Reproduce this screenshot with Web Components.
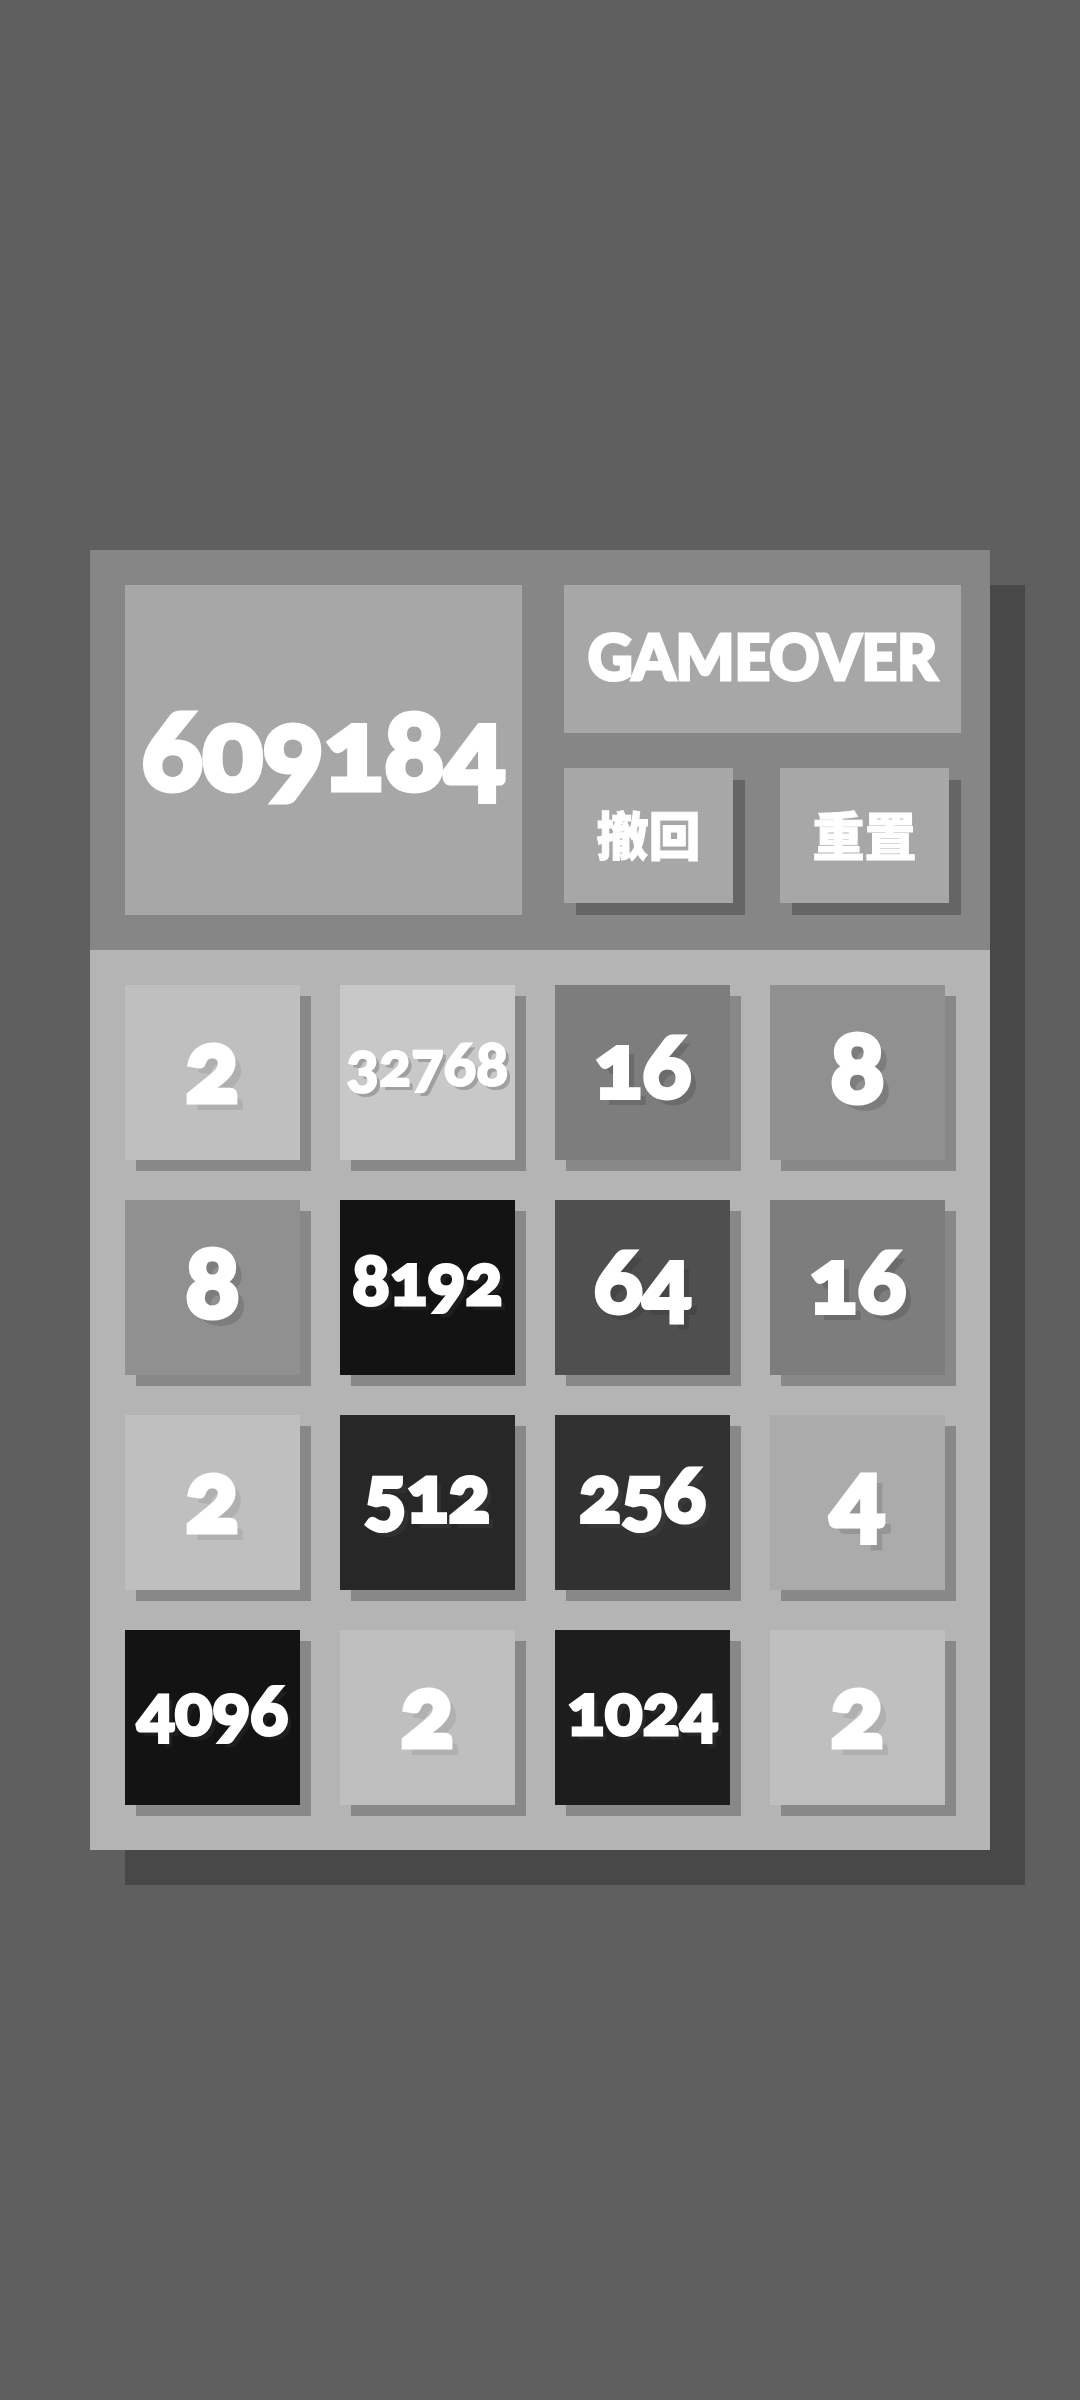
<!DOCTYPE html>
<html lang="zh-CN">
<head>
<meta charset="utf-8">
<meta name="viewport" content="width=device-width, initial-scale=1">
<title>2048</title>
<style>
  html, body { height: 100%; margin: 0; }
  body {
    background: #5f5f5f;
    color: #fff;
    font-family: Lato, "Noto Sans CJK SC", sans-serif;
    font-weight: 900;
    font-variant-numeric: oldstyle-nums;
    -webkit-text-stroke-color: #fff;
  }
</style>
</head>
<body>
<game-app></game-app>
<script>
  const define = (name, html, setup) => {
    const template = document.createElement('template');
    template.innerHTML = html;
    customElements.define(name, class extends HTMLElement {
      connectedCallback() {
        if (this.shadowRoot) return;
        this.attachShadow({ mode: 'open' }).append(template.content.cloneNode(true));
        if (setup) setup(this);
      }
    });
  };

  // Flat panel that shows a score or a status
  define('info-panel', `
    <style>
      :host {
        display: flex; align-items: center; justify-content: center;
        box-sizing: border-box; min-width: 0;
        padding-bottom: 6px;
        background: #a7a7a7;
        font-size: 62px; line-height: 1.2; white-space: nowrap;
        -webkit-text-stroke-width: 3px;
      }
      :host([large]) { font-size: 112px; -webkit-text-stroke-width: 5px; }
    </style>
    <output><slot></slot></output>
  `);

  // Raised push button
  define('game-button', `
    <style>
      :host { display: flex; min-width: 0; }
      button {
        flex: 1; margin: 0; padding: 0; border: 0;
        background: #a7a7a7; color: inherit;
        font: inherit; font-size: 52px; line-height: 1;
        -webkit-text-stroke-width: 1px;
        box-shadow: 12px 12px #656565;
        cursor: pointer;
      }
    </style>
    <button type="button"><slot></slot></button>
  `);

  // One tile; its colours and text size follow from its value
  const colours = {
    2: ['#bfbfbf', '#b0b0b0'], 4: ['#ababab', '#969696'],
    8: ['#909090', '#7d7d7d'], 16: ['#7d7d7d', '#6c6c6c'],
    64: ['#4f4f4f', '#464646'], 256: ['#313131', '#383838'],
    512: ['#272727', '#303030'], 1024: ['#1d1d1d', '#272727'],
    4096: ['#131313', '#1e1e1e'], 8192: ['#131313', '#1e1e1e'],
    32768: ['#c8c8c8', '#a0a0a0']
  };
  // digits: [text size, shadow offset, stroke]
  const sizes = { 1: [100, 8, 5], 2: [90, 7, 4], 3: [78, 6, 4], 4: [70, 5, 3], 5: [60, 4, 2] };

  define('game-tile', `
    <style>
      :host {
        display: flex; align-items: center; justify-content: center;
        box-sizing: border-box; aspect-ratio: 1; min-width: 0;
        padding-bottom: 20px;
        background: var(--tile);
        box-shadow: 11px 11px #888;
        font-size: var(--size); line-height: 1.2;
        text-shadow: var(--drop) var(--drop) var(--ink);
        -webkit-text-stroke-width: var(--stroke);
      }
    </style>
    <span></span>
  `, el => {
    const value = el.getAttribute('value');
    const [tile, ink] = colours[value];
    const [size, drop, stroke] = sizes[value.length];
    el.style.setProperty('--tile', tile);
    el.style.setProperty('--ink', ink);
    el.style.setProperty('--size', size + 'px');
    el.style.setProperty('--drop', drop + 'px');
    el.style.setProperty('--stroke', stroke + 'px');
    el.shadowRoot.querySelector('span').textContent = value;
  });

  define('game-header', `
    <style>
      :host {
        display: grid; grid-template-columns: minmax(0, 1fr) minmax(0, 1fr);
        gap: 42px; padding: 35px 29px 35px 35px;
        background: #868686;
      }
      .side { display: grid; grid-template-rows: 148px 135px; gap: 35px; padding-bottom: 12px; }
      .actions {
        display: grid; grid-template-columns: 1fr 1fr;
        gap: 47px; padding-right: 12px;
      }
    </style>
    <info-panel large>609184</info-panel>
    <div class="side">
      <info-panel>GAMEOVER</info-panel>
      <div class="actions">
        <game-button>撤回</game-button>
        <game-button>重置</game-button>
      </div>
    </div>
  `);

  define('game-board', `
    <style>
      :host {
        display: grid; grid-template-columns: repeat(4, minmax(0, 1fr));
        gap: 40px; padding: 35px 45px 45px 35px;
        background: #b4b4b4;
      }
    </style>
  `, el => {
    for (const value of el.getAttribute('cells').split(' ')) {
      const tile = document.createElement('game-tile');
      tile.setAttribute('value', value);
      el.shadowRoot.append(tile);
    }
  });

  define('game-app', `
    <style>
      :host {
        display: flex; align-items: center;
        box-sizing: border-box; min-height: 100%; padding: 60px 90px;
      }
      main { flex: 1; min-width: 0; box-shadow: 35px 35px #484848; }
    </style>
    <main>
      <game-header></game-header>
      <game-board cells="2 32768 16 8 8 8192 64 16 2 512 256 4 4096 2 1024 2"></game-board>
    </main>
  `);
</script>
</body>
</html>
